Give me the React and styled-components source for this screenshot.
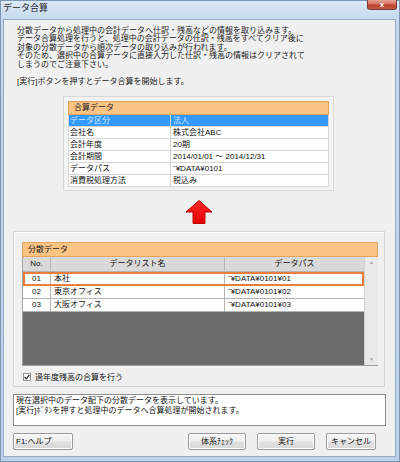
import React from 'react'
import styled, { createGlobalStyle } from 'styled-components'

const Global = createGlobalStyle`
    html, body {
        margin: 0;
        padding: 0;
        width: 400px;
        height: 462px;
        overflow: hidden;
        background: #c9dbef;
    }
    * { box-sizing: border-box; }
`

const font = `"Liberation Sans", "Noto Sans CJK JP", sans-serif`

const Window = styled.div`
    width: 400px;
    height: 462px;
    display: flex;
    flex-direction: column;
    font-family: ${font};
    background: linear-gradient(180deg, #dbe8f6 0px, #c4d8ee 20px, #bcd2ea 100%);
    border: 1px solid #7d96b4;
`
const TitleBar = styled.div`
    height: 18px;
    display: flex;
    align-items: flex-start;
    justify-content: space-between;
    padding-left: 2px;
`
const Title = styled.span`
    font-size: 9px;
    line-height: 14px;
    color: #1b1b1b;
`
const CloseButton = styled.div`
    width: 30px;
    height: 10px;
    margin-right: 2px;
    margin-top: -1px;
    border: 1px solid #7a3a3a;
    border-top: none;
    border-radius: 0 0 3px 3px;
    background: linear-gradient(180deg, #e8a293 0%, #d0705d 45%, #b8412d 55%, #c85a44 100%);
    color: #fff;
    font-size: 8px;
    font-weight: bold;
    line-height: 9px;
    text-align: center;
`
const Client = styled.div`
    flex: 1;
    margin: 0 3px 4px 2px;
    border: 1px solid #94a9c2;
    background: #f0f0f0;
    display: flex;
    flex-direction: column;
`
const Intro = styled.div`
    padding: 7px 0 0 13px;
    font-size: 8px;
    line-height: 8.4px;
    color: #1a1a1a;
    white-space: pre;
`
const IntroNote = styled(Intro)`
    padding-top: 9px;
`
const DataCard = styled.div`
    width: 271px;
    margin: 10px 0 0 59px;
    border: 1px solid #d8d8d8;
    background: #f3f3f3;
    padding: 4px 4px 3px 4px;
`
const OrangeHeader = styled.div`
    height: ${p => p.$h}px;
    background: #fbc384;
    border: 1px solid #e3a45e;
    font-size: 8px;
    line-height: ${p => p.$h - 2}px;
    padding-left: 5px;
    color: #222;
`
const InfoRow = styled.div`
    display: grid;
    grid-template-columns: 101px 1fr;
    height: 12px;
    font-size: 8px;
    line-height: 11px;
    background: ${p => (p.$active ? '#3399ff' : '#fff')};
    color: ${p => (p.$active ? '#cfe7ff' : '#111')};
    border-bottom: 1px solid #d6d6d6;
    border-left: 1px solid #d6d6d6;
    border-right: 1px solid #d6d6d6;
`
const InfoCell = styled.div`
    padding-left: 1px;
    white-space: nowrap;
    & + & { border-left: 1px solid #d6d6d6; padding-left: 2px; }
`
const ArrowWrap = styled.div`
    height: 24px;
    margin-top: 9px;
    display: flex;
    justify-content: center;
    padding-right: 2px;
`
const Group = styled.div`
    margin: 7px 0 0 9px;
    width: 372px;
    height: 156px;
    border: 1px solid #d5d5d5;
    box-shadow: inset 1px 1px 0 #fff;
    padding: 10px 6px 0 8px;
`
const GridFrame = styled.div`
    display: flex;
    height: 109px;
    border-left: 1px solid #a0a0a0;
    border-bottom: 1px solid #a0a0a0;
`
const GridBody = styled.div`
    width: 342px;
    display: flex;
    flex-direction: column;
    background: #6b6b6b;
`
const GridRow = styled.div`
    display: grid;
    grid-template-columns: 27px 174px 1fr;
    height: ${p => p.$h || 13}px;
    font-size: 8px;
    line-height: ${p => (p.$h || 13) - 1}px;
    background: ${p => (p.$head ? '#d9d9d9' : '#fff')};
    color: #111;
    border-bottom: 1px solid #b4b4b4;
    outline: ${p => (p.$selected ? '2px solid #ee7d3b' : 'none')};
    outline-offset: -2px;
    position: relative;
`
const GridCell = styled.div`
    text-align: ${p => p.$align || 'left'};
    padding-left: ${p => (p.$align === 'center' ? 0 : 3)}px;
    white-space: nowrap;
    & + & { border-left: 1px solid #b4b4b4; }
`
const Scrollbar = styled.div`
    width: 14px;
    background: #e9e9e9;
    border-left: 1px solid #d0d0d0;
    display: flex;
    flex-direction: column;
    justify-content: space-between;
    align-items: center;
    padding: 2px 0 3px;
    color: #a8a8a8;
    font-size: 5px;
    line-height: 6px;
`
const CheckRow = styled.label`
    display: flex;
    align-items: center;
    gap: 4px;
    margin: 5px 0 0 1px;
    font-size: 8px;
    color: #111;
`
const CheckBox = styled.span`
    width: 8px;
    height: 8px;
    border: 1px solid #8f8f8f;
    background: #fff;
    display: flex;
    align-items: center;
    justify-content: center;
`
const Message = styled.div`
    margin: 7px 0 0 9px;
    width: 373px;
    height: 32px;
    background: #fff;
    border: 1px solid #8d8d8d;
    font-size: 8px;
    line-height: 9.5px;
    padding: 1px 0 0 2px;
    color: #111;
    white-space: pre;
`
const ButtonBar = styled.div`
    display: flex;
    margin: 7px 0 0 9px;
    width: 365px;
    height: 17px;
    gap: 11px;
`
const Button = styled.div`
    width: ${p => p.$w}px;
    height: 17px;
    margin-right: ${p => p.$gapAfter || 0}px;
    border: 1px solid #9a9a9a;
    border-radius: 2px;
    background: linear-gradient(180deg, #f7f7f7 0%, #eeeeee 48%, #e0e0e0 52%, #d8d8d8 100%);
    box-shadow: inset 0 0 0 1px #fcfcfc;
    font-size: 8px;
    line-height: 15px;
    text-align: ${p => (p.$left ? 'left' : 'center')};
    padding-left: ${p => (p.$left ? 2 : 0)}px;
    color: #111;
`

const info = [
    ['データ区分', '法人', true],
    ['会社名', '株式会社ABC'],
    ['会計年度', '20期'],
    ['会計期間', '2014/01/01 ～ 2014/12/31'],
    ['データパス', '˜¥DATA¥0101'],
    ['消費税処理方法', '税込み'],
]

const rows = [
    ['01', '本社', '˜¥DATA¥0101¥01', true],
    ['02', '東京オフィス', '˜¥DATA¥0101¥02'],
    ['03', '大阪オフィス', '˜¥DATA¥0101¥03'],
]

function UpArrow() {
    return (
        <svg width="28" height="24" viewBox="0 0 28 24">
            <defs>
                <linearGradient id="ar" x1="0" y1="0" x2="0" y2="1">
                    <stop offset="0" stopColor="#ff2a2a" />
                    <stop offset="1" stopColor="#e00000" />
                </linearGradient>
            </defs>
            <polygon points="14,0.5 27,12 20,12 20,23.5 8,23.5 8,12 1,12" fill="url(#ar)" stroke="#c40000" strokeWidth="1" />
        </svg>
    )
}

export default function App() {
    return (
        <Window>
            <Global />
            <TitleBar>
                <Title>データ合算</Title>
                <CloseButton>x</CloseButton>
            </TitleBar>
            <Client>
                <Intro>{`分散データから処理中の会計データへ仕訳・残高などの情報を取り込みます。
データ合算処理を行うと、処理中の会計データの仕訳・残高をすべてクリア後に
対象の分散データから順次データの取り込みが行われます。
そのため、選択中の合算データに直接入力した仕訳・残高の情報はクリアされて
しまうのでご注意下さい。`}</Intro>
                <IntroNote>[実行]ボタンを押すとデータ合算を開始します。</IntroNote>

                <DataCard>
                    <OrangeHeader $h={14}>合算データ</OrangeHeader>
                    {info.map(([k, v, a]) => (
                        <InfoRow key={k} $active={a}>
                            <InfoCell>{k}</InfoCell>
                            <InfoCell>{v}</InfoCell>
                        </InfoRow>
                    ))}
                </DataCard>

                <ArrowWrap><UpArrow /></ArrowWrap>

                <Group>
                    <OrangeHeader $h={15}>分散データ</OrangeHeader>
                    <GridFrame>
                        <GridBody>
                            <GridRow $head $h={15}>
                                <GridCell $align="center">No.</GridCell>
                                <GridCell $align="center">データリスト名</GridCell>
                                <GridCell $align="center">データパス</GridCell>
                            </GridRow>
                            {rows.map(([no, name, path, sel]) => (
                                <GridRow key={no} $selected={sel} $h={no === '01' ? 14 : 13}>
                                    <GridCell $align="center">{no}</GridCell>
                                    <GridCell>{name}</GridCell>
                                    <GridCell>{path}</GridCell>
                                </GridRow>
                            ))}
                        </GridBody>
                        <Scrollbar>
                            <span>▲</span>
                            <span>▼</span>
                        </Scrollbar>
                    </GridFrame>
                    <CheckRow>
                        <CheckBox>
                            <svg width="6" height="6" viewBox="0 0 6 6">
                                <path d="M0.6 3 L2.3 4.8 L5.4 0.9" fill="none" stroke="#222" strokeWidth="1.2" />
                            </svg>
                        </CheckBox>
                        過年度残高の合算を行う
                    </CheckRow>
                </Group>

                <Message>{`現在選択中のデータ配下の分散データを表示しています。
[実行]ﾎﾞﾀﾝを押すと処理中のデータへ合算処理が開始されます。`}</Message>

                <ButtonBar>
                    <Button $w={60} $left $gapAfter={104}>F1:ヘルプ</Button>
                    <Button $w={58}>体系ﾁｪｯｸ</Button>
                    <Button $w={58}>実行</Button>
                    <Button $w={50}>キャンセル</Button>
                </ButtonBar>
            </Client>
        </Window>
    )
}
